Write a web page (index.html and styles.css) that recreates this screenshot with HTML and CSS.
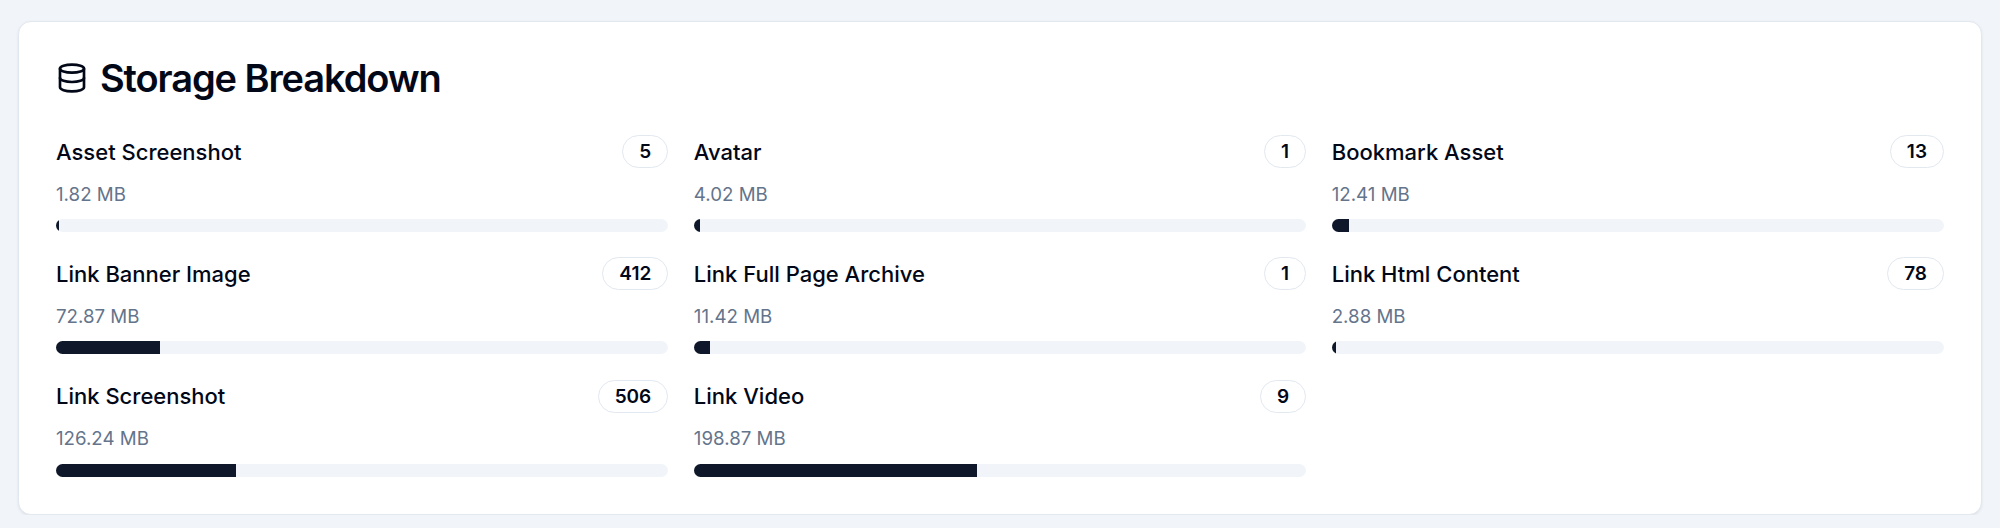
FILE: index.html
```html
<!DOCTYPE html>
<html lang="en">

<head>
    <meta charset="UTF-8">
    <title>Storage Breakdown</title>
    <link rel="stylesheet" href="styles.css">
</head>

<body>
    <section class="card">
        <h2 class="card-title">
            <svg class="title-icon" viewBox="0 0 24 24" fill="none" stroke="currentColor" stroke-width="2"
                stroke-linecap="round" stroke-linejoin="round">
                <ellipse cx="12" cy="5" rx="9" ry="3"></ellipse>
                <path d="M3 5v14c0 1.66 4 3 9 3s9-1.34 9-3V5"></path>
                <path d="M3 12c0 1.66 4 3 9 3s9-1.34 9-3"></path>
            </svg>
            Storage Breakdown
        </h2>

        <div class="grid">
            <div class="item">
                <div class="item-head"><span class="item-name">Asset Screenshot</span><span class="badge">5</span></div>
                <div class="item-size">1.82 MB</div>
                <div class="bar"><div class="bar-fill" style="width: 0.43%"></div></div>
            </div>
            <div class="item">
                <div class="item-head"><span class="item-name">Avatar</span><span class="badge">1</span></div>
                <div class="item-size">4.02 MB</div>
                <div class="bar"><div class="bar-fill" style="width: 0.93%"></div></div>
            </div>
            <div class="item">
                <div class="item-head"><span class="item-name">Bookmark Asset</span><span class="badge">13</span></div>
                <div class="item-size">12.41 MB</div>
                <div class="bar"><div class="bar-fill" style="width: 2.8%"></div></div>
            </div>
            <div class="item">
                <div class="item-head"><span class="item-name">Link Banner Image</span><span class="badge">412</span></div>
                <div class="item-size">72.87 MB</div>
                <div class="bar"><div class="bar-fill" style="width: 17%"></div></div>
            </div>
            <div class="item">
                <div class="item-head"><span class="item-name">Link Full Page Archive</span><span class="badge">1</span></div>
                <div class="item-size">11.42 MB</div>
                <div class="bar"><div class="bar-fill" style="width: 2.65%"></div></div>
            </div>
            <div class="item">
                <div class="item-head"><span class="item-name">Link Html Content</span><span class="badge">78</span></div>
                <div class="item-size">2.88 MB</div>
                <div class="bar"><div class="bar-fill" style="width: 0.67%"></div></div>
            </div>
            <div class="item">
                <div class="item-head"><span class="item-name">Link Screenshot</span><span class="badge">506</span></div>
                <div class="item-size">126.24 MB</div>
                <div class="bar"><div class="bar-fill" style="width: 29.4%"></div></div>
            </div>
            <div class="item">
                <div class="item-head"><span class="item-name">Link Video</span><span class="badge">9</span></div>
                <div class="item-size">198.87 MB</div>
                <div class="bar"><div class="bar-fill" style="width: 46.2%"></div></div>
            </div>
        </div>
    </section>
</body>

</html>
```

FILE: styles.css
```css
body {
    margin: 0;
    padding: 21px 18px 0;
    background-color: #f1f5f9;
    font-family: Inter, "Liberation Sans", sans-serif;
    color: #020817;
}

.card {
    background-color: #fff;
    border: 1px solid #e2e8f0;
    border-radius: 13px;
    padding: 36px 37px 37px;
    box-shadow: 0 1px 3px rgba(0, 0, 0, 0.08);
}

.card-title {
    display: flex;
    align-items: center;
    gap: 12px;
    margin: 0 0 37px;
    font-size: 38px;
    line-height: 40px;
    font-weight: 600;
    letter-spacing: -1.1px;
}

.title-icon {
    width: 32px;
    height: 32px;
    flex-shrink: 0;
}

.grid {
    display: grid;
    grid-template-columns: repeat(3, 1fr);
    gap: 25.6px;
}

.item-head {
    display: flex;
    justify-content: space-between;
    align-items: center;
}

.item-name {
    font-size: 22px;
    font-weight: 500;
}

.badge {
    border: 1px solid #e2e8f0;
    border-radius: 999px;
    padding: 3px 16px;
    font-size: 19px;
    line-height: 25px;
    font-weight: 600;
}

.item-size {
    margin-top: 12.5px;
    font-size: 18.7px;
    line-height: 28px;
    color: #64748b;
}

.bar {
    height: 12.8px;
    margin-top: 10.5px;
    border-radius: 999px;
    background-color: #f1f5f9;
    overflow: hidden;
}

.bar-fill {
    height: 100%;
    background-color: #0f172a;
}
```
